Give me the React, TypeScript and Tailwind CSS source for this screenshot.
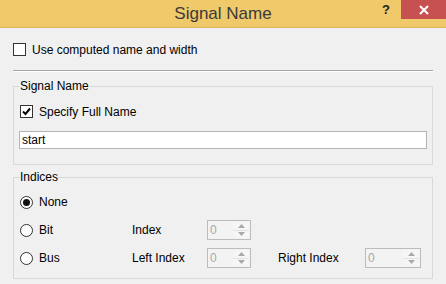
import React from 'react';

const font = { fontFamily: '"Liberation Sans", Arial, sans-serif' };

function CheckBox({ checked }: { checked?: boolean }) {
  return (
    <span className="w-[13px] h-[13px] border border-[#333333] bg-white flex items-center justify-center shrink-0">
      {checked && (
        <svg width="9" height="9" viewBox="0 0 9 9">
          <path d="M1 4.5 L3.5 7 L8 1.5" fill="none" stroke="#000" strokeWidth="2" />
        </svg>
      )}
    </span>
  );
}

function Radio({ checked }: { checked?: boolean }) {
  return (
    <span className="w-[13px] h-[13px] rounded-full border border-[#333333] bg-white flex items-center justify-center shrink-0">
      {checked && <span className="w-[7px] h-[7px] rounded-full bg-[#111]" />}
    </span>
  );
}

function SpinBox({ width }: { width: string }) {
  return (
    <div className={`${width} h-[20px] border border-[#bcbcbc] bg-[#f3f3f3] flex items-stretch`}>
      <span className="flex-1 pl-[2px] text-[12px] leading-[18px] text-[#a8a8a8]">0</span>
      <div className="w-[16px] my-[1px] mr-[1px] flex flex-col bg-[#f6f6f6]">
        <div className="flex-1 flex items-center justify-center border-b border-[#e2e2e2]">
          <svg width="7" height="4" viewBox="0 0 7 4"><path d="M3.5 0 L7 4 L0 4 Z" fill="#a9a9a9" /></svg>
        </div>
        <div className="flex-1 flex items-center justify-center">
          <svg width="7" height="4" viewBox="0 0 7 4"><path d="M0 0 L7 0 L3.5 4 Z" fill="#a9a9a9" /></svg>
        </div>
      </div>
    </div>
  );
}

export default function App() {
  return (
    <div className="w-[446px] h-[284px] bg-[#f0f0f0] text-[12px] text-black overflow-hidden" style={font}>
      {/* title bar */}
      <div className="h-[28px] bg-[#f0c96b] border-b border-[#ddb25a] grid grid-cols-[1fr_auto_1fr]">
        <div />
        <div className="text-[17px] leading-[27px] text-[#3a3a3a]">Signal Name</div>
        <div className="flex justify-end items-start">
          <span className="w-[30px] h-[19px] flex items-center justify-center text-[13px] font-bold text-[#222]">?</span>
          <span className="w-[45px] h-[19px] bg-[#c75050] flex items-center justify-center">
            <svg width="10" height="10" viewBox="0 0 10 10">
              <path d="M1 1 L9 9 M9 1 L1 9" stroke="#fff" strokeWidth="2" />
            </svg>
          </span>
        </div>
      </div>

      <div className="px-[13px]">
        <div className="mt-[15px] flex items-center gap-[6px] h-[13px]">
          <CheckBox />
          <span>Use computed name and width</span>
        </div>

        <div className="mt-[14px] border-t border-b border-t-[#a6a6a6] border-b-white" />

        <fieldset className="mt-[7px] border border-[#d9d9d9] px-[5px] pb-[15px]">
          <legend className="px-[1px] leading-[15px]">Signal Name</legend>
          <div className="mt-[11px] ml-[1px] flex items-center gap-[6px] h-[13px]">
            <CheckBox checked />
            <span>Specify Full Name</span>
          </div>
          <div className="mt-[13px] h-[18px] border border-[#b5b5b5] bg-white pl-[2px] leading-[16px]">start</div>
        </fieldset>

        <fieldset className="mt-[5px] border border-[#d9d9d9] px-[6px] pb-[10px]">
          <legend className="leading-[15px]">Indices</legend>
          <div className="mt-[7px] flex flex-col gap-[8px]">
            <div className="h-[20px] flex items-center">
              <label className="w-[112px] flex items-center gap-[6px]">
                <Radio checked />
                <span>None</span>
              </label>
            </div>
            <div className="h-[20px] flex items-center">
              <label className="w-[112px] flex items-center gap-[6px]">
                <Radio />
                <span>Bit</span>
              </label>
              <span className="w-[75px]">Index</span>
              <SpinBox width="w-[44px]" />
            </div>
            <div className="h-[20px] flex items-center">
              <label className="w-[112px] flex items-center gap-[6px]">
                <Radio />
                <span>Bus</span>
              </label>
              <span className="w-[75px]">Left Index</span>
              <SpinBox width="w-[44px]" />
              <span className="ml-[27px] w-[87px]">Right Index</span>
              <SpinBox width="w-[56px]" />
            </div>
          </div>
        </fieldset>
      </div>
    </div>
  );
}
